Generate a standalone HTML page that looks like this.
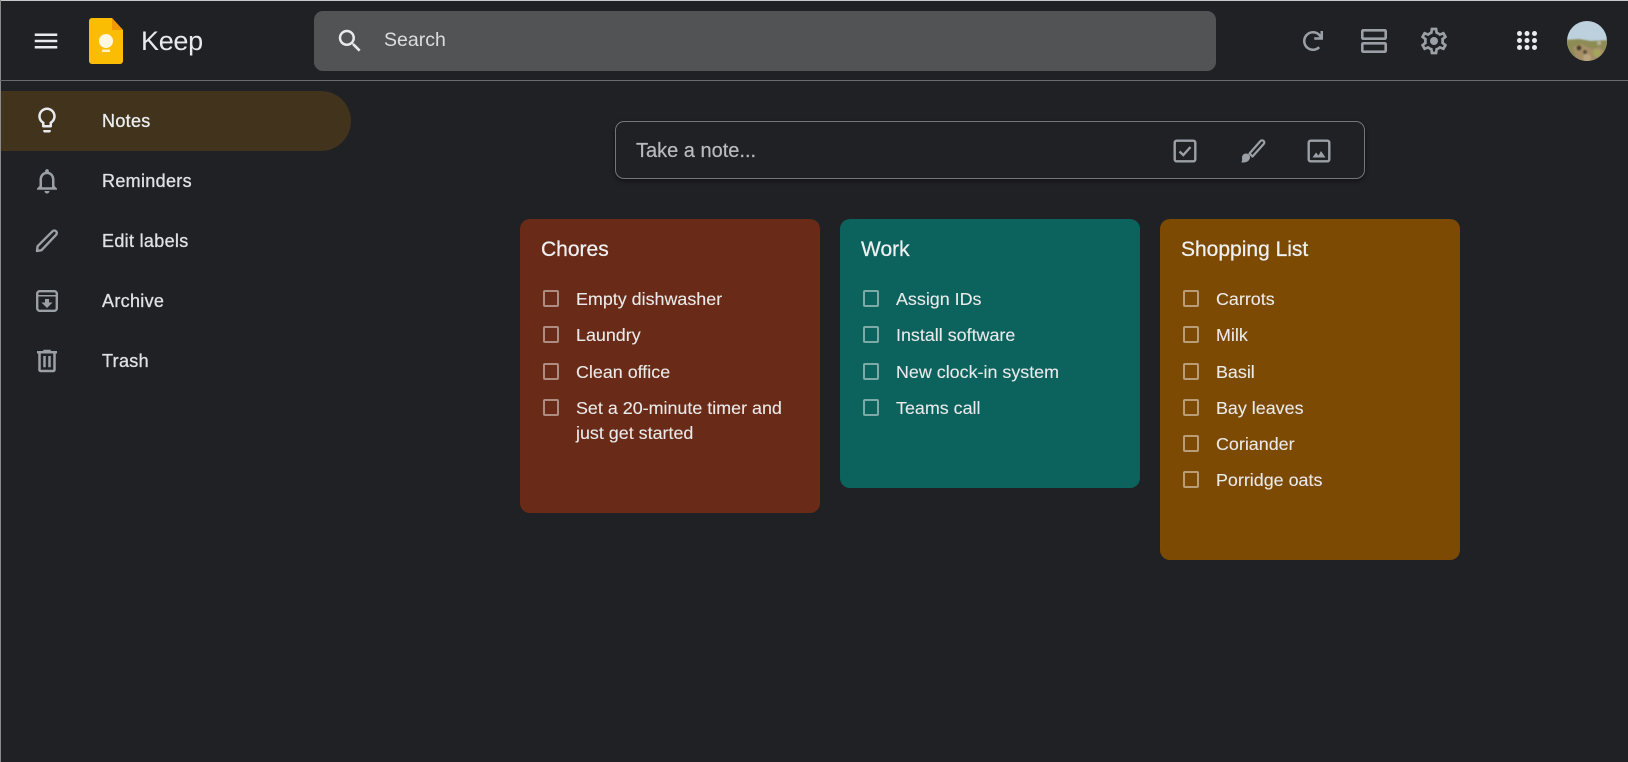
<!DOCTYPE html>
<html lang="en"><head><meta charset="utf-8"><title>Keep</title>
<style>
html,body{margin:0;padding:0;width:1628px;height:762px;overflow:hidden;background:#202124}
body{position:relative;font-family:"Liberation Sans",sans-serif;color:#e8eaed}
.a{position:absolute}
.t{position:absolute;white-space:nowrap;line-height:1}
svg{position:absolute;display:block}
.nav{font-size:18px;letter-spacing:.32px;left:102px;-webkit-text-stroke:.3px;color:#dfe1e4}
.card{position:absolute;width:300px;top:219px;border-radius:10px}
.h{font-size:21px;-webkit-text-stroke:.25px;top:20px;left:21px;position:absolute;line-height:1;white-space:nowrap;color:#eef0f1}
.cb{position:absolute;left:22.500px;width:12.500px;height:12.500px;border:2px solid rgba(255,255,255,.46);border-radius:2px}
.li{position:absolute;left:56px;font-size:17.9px;line-height:1;white-space:nowrap;color:#eaeaea;-webkit-text-stroke:.1px}
</style></head><body>
<div class="a" style="left:0;top:0;width:1628px;height:1px;background:#c8c8c8"></div>
<div class="a" style="left:0;top:0;width:1px;height:762px;background:#8a8a8a"></div>
<div class="a" style="left:0;top:80px;width:1628px;height:1px;background:#6a6b6d"></div>

<svg style="left:31px;top:26px" width="30" height="30" viewBox="0 0 24 24" fill="#e8eaed"><path d="M3 18h18v-2H3v2zm0-5h18v-2H3v2zm0-7v2h18V6H3z"/></svg>
<svg style="left:89px;top:18px" width="34" height="46" viewBox="0 0 34 46"><path d="M3 0h20l11 12v31a3 3 0 0 1-3 3H3a3 3 0 0 1-3-3V3a3 3 0 0 1 3-3z" fill="#fbbc04"/><path d="M23 0l11 12H23z" fill="#f29900"/><circle cx="17" cy="23" r="7" fill="#fff8e0"/><rect x="13" y="31.500" width="8" height="2.500" fill="#fff2c0"/></svg>
<div class="t" style="left:141px;top:28px;font-size:27px;letter-spacing:-.3px;color:#e8eaed">Keep</div>

<div class="a" style="left:314px;top:11px;width:902px;height:60px;background:#525355;border-radius:9px"></div>
<svg style="left:335px;top:26px" width="30" height="30" viewBox="0 0 24 24" fill="#e8eaed"><path d="M15.500 14h-.79l-.28-.27C15.410 12.590 16 11.110 16 9.500 16 5.910 13.090 3 9.500 3S3 5.910 3 9.500 5.910 16 9.500 16c1.610 0 3.090-.59 4.230-1.570l.27.28v.79l5 4.990L20.490 19l-4.990-5zm-6 0C7.010 14 5 11.990 5 9.500S7.010 5 9.500 5 14 7.010 14 9.500 11.990 14 9.500 14z"/></svg>
<div class="t" style="left:384px;top:31px;font-size:19.500px;color:#dcdddf">Search</div>

<svg style="left:1298px;top:26px" width="30" height="30" viewBox="0 0 24 24" fill="#9aa0a6"><path d="M13 9v2h7V4h-2v2.740C16.530 5.070 14.400 4 12 4c-2.210 0-4.210.9-5.660 2.340S4 9.790 4 12c0 4.420 3.580 8 8 8 2.210 0 4.210-.9 5.660-2.340l-1.420-1.420A5.980 5.980 0 0 1 12 18c-3.310 0-6-2.690-6-6 0-1.650.67-3.150 1.760-4.240A5.980 5.980 0 0 1 12 6a6.010 6.010 0 0 1 5.190 3H13z"/></svg>
<svg style="left:1359px;top:27px" width="30" height="28" viewBox="0 0 30 28" fill="none" stroke="#9aa0a6" stroke-width="2.600"><rect x="3.300" y="3.300" width="23.400" height="8.400" rx="1"/><rect x="3.300" y="16.300" width="23.400" height="8.400" rx="1"/></svg>
<svg style="left:1418px;top:25px" width="32" height="32" viewBox="0 0 24 24" fill="#9aa0a6"><path d="M19.430 12.980c.04-.32.07-.64.07-.98 0-.34-.03-.66-.07-.98l2.110-1.650c.19-.15.24-.42.12-.64l-2-3.460a.5.5 0 0 0-.61-.22l-2.490 1c-.52-.4-1.080-.73-1.690-.98l-.38-2.650A.488.488 0 0 0 14 2h-4c-.25 0-.46.18-.49.42l-.38 2.650c-.61.25-1.170.59-1.690.98l-2.490-1a.566.566 0 0 0-.18-.03c-.17 0-.34.09-.43.25l-2 3.460c-.13.22-.07.49.12.64l2.110 1.650c-.04.32-.07.65-.07.98 0 .33.03.66.07.98l-2.110 1.650c-.19.15-.24.42-.12.64l2 3.460a.5.5 0 0 0 .61.22l2.490-1c.52.4 1.080.73 1.690.98l.38 2.650c.03.24.24.42.49.42h4c.25 0 .46-.18.49-.42l.38-2.650c.61-.25 1.170-.59 1.690-.98l2.490 1c.06.02.12.03.18.03.17 0 .34-.09.43-.25l2-3.460c.12-.22.07-.49-.12-.64l-2.110-1.650zm-1.980-1.710c.04.31.05.52.05.73 0 .21-.02.43-.05.73l-.14 1.130.89.7 1.080.84-.7 1.210-1.270-.51-1.040-.42-.9.68c-.43.32-.84.56-1.250.73l-1.060.43-.16 1.130-.2 1.350h-1.400l-.19-1.350-.16-1.130-1.060-.43c-.43-.18-.83-.41-1.230-.71l-.91-.7-1.060.43-1.270.51-.7-1.210 1.080-.84.89-.7-.14-1.130c-.03-.31-.05-.54-.05-.74s.02-.43.05-.73l.14-1.130-.89-.7-1.080-.84.7-1.210 1.270.51 1.040.42.9-.68c.43-.32.84-.56 1.250-.73l1.060-.43.16-1.130.2-1.350h1.390l.19 1.350.16 1.130 1.060.43c.43.18.83.41 1.230.71l.91.7 1.060-.43 1.270-.51.7 1.210-1.070.85-.89.7.14 1.130z"/><circle cx="12" cy="12" r="3"/></svg>
<svg style="left:1515px;top:29px" width="24" height="24" viewBox="0 0 24 24" fill="#e8eaed"><circle cx="4.500" cy="4.500" r="2.500"/><circle cx="12" cy="4.500" r="2.500"/><circle cx="19.500" cy="4.500" r="2.500"/><circle cx="4.500" cy="11.500" r="2.500"/><circle cx="12" cy="11.500" r="2.500"/><circle cx="19.500" cy="11.500" r="2.500"/><circle cx="4.500" cy="18.500" r="2.500"/><circle cx="12" cy="18.500" r="2.500"/><circle cx="19.500" cy="18.500" r="2.500"/></svg>
<svg style="left:1567px;top:21px" width="40" height="40" viewBox="0 0 40 40"><defs><clipPath id="c"><circle cx="20" cy="20" r="20"/></clipPath><filter id="b"><feGaussianBlur stdDeviation=".8"/></filter></defs><g clip-path="url(#c)"><rect width="40" height="40" fill="#bcd0de"/><g filter="url(#b)"><path d="M-2 19l14-1 12 2 18-1v23H-2z" fill="#8d8c55"/><path d="M6 26l9-3 9 5 9-2 6 7-10 9H10z" fill="#a68f66"/><circle cx="12" cy="27" r="2.500" fill="#4a402e"/><circle cx="18" cy="31" r="2" fill="#5a4d38"/><circle cx="30" cy="32" r="4" fill="#a4a65c"/><circle cx="20" cy="37" r="4" fill="#b8a57e"/><circle cx="32" cy="22" r="2" fill="#b3b394"/></g></g></svg>

<div class="a" style="left:1px;top:91px;width:350px;height:60px;background:#41331c;border-radius:0 30px 30px 0"></div>
<svg style="left:32px;top:105px" width="30" height="30" viewBox="0 0 24 24" fill="#e8eaed"><path d="M9 21c0 .55.45 1 1 1h4c.55 0 1-.45 1-1v-1H9v1zm3-19C8.140 2 5 5.140 5 9c0 2.380 1.190 4.470 3 5.740V17c0 .55.45 1 1 1h6c.55 0 1-.45 1-1v-2.260c1.810-1.270 3-3.360 3-5.740 0-3.860-3.140-7-7-7zm2.850 11.100l-.85.6V16h-4v-2.300l-.85-.6A4.997 4.997 0 0 1 7 9c0-2.760 2.240-5 5-5s5 2.240 5 5c0 1.630-.8 3.160-2.150 4.100z"/></svg>
<svg style="left:32px;top:166px" width="30" height="30" viewBox="0 0 24 24" fill="#9aa0a6"><path d="M12 22c1.100 0 2-.9 2-2h-4c0 1.100.9 2 2 2zm6-6v-5c0-3.070-1.630-5.640-4.500-6.320V4c0-.83-.67-1.500-1.500-1.500s-1.500.67-1.500 1.500v.68C7.640 5.360 6 7.920 6 11v5l-2 2v1h16v-1l-2-2zm-2 1H8v-6c0-2.480 1.510-4.500 4-4.500s4 2.020 4 4.500v6z"/></svg>
<svg style="left:31px;top:225px" width="30" height="30" viewBox="0 0 30 30" fill="none" stroke="#9aa0a6" stroke-width="2.400" stroke-linejoin="round"><path d="M6 26l.6-4.800L21.500 6.300a2.500 2.500 0 0 1 3.600 3.500L10.500 25.200z"/></svg>
<svg style="left:32px;top:286px" width="30" height="30" viewBox="0 0 30 30" fill="none" stroke="#9aa0a6" stroke-width="2.400"><rect x="5.200" y="5.200" width="19.600" height="19.600" rx="2.500"/><path d="M5 9.800h20" stroke-width="1.500"/><path d="M13 13h4v3.500h3.500L15 22l-5.500-5.500H13z" fill="#9aa0a6" stroke="none"/></svg>
<svg style="left:32px;top:346px" width="30" height="30" viewBox="0 0 24 24" fill="#9aa0a6"><path d="M15 4V3H9v1H4v2h1v13c0 1.100.9 2 2 2h10c1.100 0 2-.9 2-2V6h1V4h-5zm2 15H7V6h10v13z"/><path d="M9 8h2v9H9zm4 0h2v9h-2z"/></svg>

<div class="t nav" style="top:112px;color:#eceef0">Notes</div>
<div class="t nav" style="top:172px">Reminders</div>
<div class="t nav" style="top:232px">Edit labels</div>
<div class="t nav" style="top:292px">Archive</div>
<div class="t nav" style="top:352px">Trash</div>

<div class="a" style="left:615px;top:121px;width:748px;height:56px;border:1px solid #737578;border-radius:9px;box-shadow:0 2px 5px rgba(0,0,0,.45);background:#202124"></div>
<div class="t" style="left:636px;top:141px;font-size:20px;color:#b9bbbe;-webkit-text-stroke:.2px">Take a note...</div>
<svg style="left:1170px;top:136px" width="30" height="30" viewBox="0 0 30 30" fill="none" stroke="#9aa0a6" stroke-width="2.400"><rect x="4.700" y="4.700" width="20.600" height="20.600" rx="2"/><path d="M9.500 15.500l3.800 3.500 7.200-8" stroke-width="2.400"/></svg>
<svg style="left:1237px;top:136px" width="30" height="30" viewBox="0 0 30 30"><path d="M15.500 20.500l-3-3L23.500 5a2.100 2.100 0 0 1 3.200 3z" fill="none" stroke="#9aa0a6" stroke-width="2.200" stroke-linejoin="round"/><path d="M9 17.500c3 0 4.500 2.500 4 4.500-.7 2.600-3 4.500-6.500 4.500-1 0-2.500-.3-2.500-.3 1.700-1.200 1-3 1-4.500 0-2.500 2-4.200 4-4.200z" fill="#9aa0a6"/></svg>
<svg style="left:1304px;top:136px" width="30" height="30" viewBox="0 0 30 30" fill="none" stroke="#9aa0a6" stroke-width="2.400"><rect x="4.700" y="4.700" width="20.600" height="20.600" rx="2"/><path d="M8.500 21.500l3.500-5 2.500 3 2.500-4.500 4.500 6.500z" fill="#9aa0a6" stroke="none"/></svg>

<div class="card" style="left:520px;height:294px;background:#692b17">
<div class="h">Chores</div>
<div class="cb" style="top:71px"></div><div class="li" style="top:72px">Empty dishwasher</div>
<div class="cb" style="top:107px"></div><div class="li" style="top:108px">Laundry</div>
<div class="cb" style="top:144px"></div><div class="li" style="top:145px">Clean office</div>
<div class="cb" style="top:180px"></div><div class="li" style="top:181px">Set a 20-minute timer and</div>
<div class="li" style="top:206px">just get started</div>
</div>
<div class="card" style="left:840px;height:269px;background:#0c625d">
<div class="h">Work</div>
<div class="cb" style="top:71px"></div><div class="li" style="top:72px">Assign IDs</div>
<div class="cb" style="top:107px"></div><div class="li" style="top:108px">Install software</div>
<div class="cb" style="top:144px"></div><div class="li" style="top:145px">New clock-in system</div>
<div class="cb" style="top:180px"></div><div class="li" style="top:181px">Teams call</div>
</div>
<div class="card" style="left:1160px;height:341px;background:#7c4a03">
<div class="h">Shopping List</div>
<div class="cb" style="top:71px"></div><div class="li" style="top:72px">Carrots</div>
<div class="cb" style="top:107px"></div><div class="li" style="top:108px">Milk</div>
<div class="cb" style="top:144px"></div><div class="li" style="top:145px">Basil</div>
<div class="cb" style="top:180px"></div><div class="li" style="top:181px">Bay leaves</div>
<div class="cb" style="top:216px"></div><div class="li" style="top:217px">Coriander</div>
<div class="cb" style="top:252px"></div><div class="li" style="top:253px">Porridge oats</div>
</div>
</body></html>
